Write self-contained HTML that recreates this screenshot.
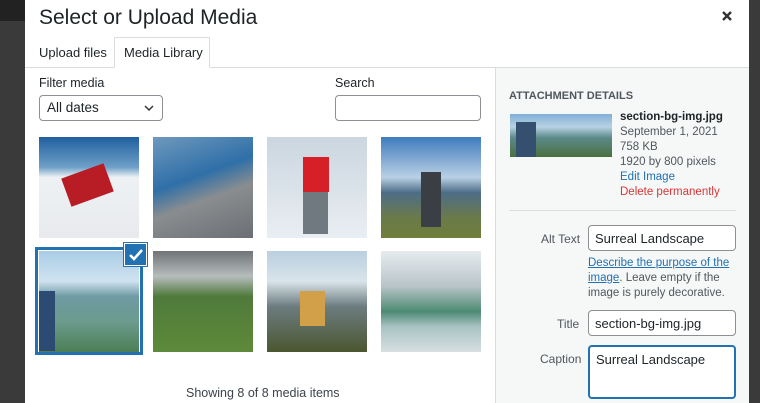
<!DOCTYPE html>
<html><head><style>
*{box-sizing:border-box;margin:0;padding:0}
body{width:760px;height:403px;overflow:hidden;background:#3a3a3a;font-family:"Liberation Sans",sans-serif;color:#1d2327;position:relative}
.abs{position:absolute}
.modal{left:25px;top:0;width:724px;height:403px;background:#fff}
h1{position:absolute;left:14px;top:6px;font-size:21px;font-weight:normal;color:#1d2327}
.x{position:absolute;left:696px;top:10px}
.tabs{position:absolute;left:0;top:67px;width:724px;border-top:1px solid #dcdcde}
.tab{position:absolute;font-size:13px;top:45px}
.side{position:absolute;left:470px;top:67px;width:254px;height:336px;background:#f6f7f7;border-left:1px solid #dcdcde;border-top:1px solid #dcdcde}
.lbl{font-size:12.5px;color:#1d2327}
.sel{position:absolute;left:14px;top:95px;width:124px;height:26px;border:1px solid #8c8f94;border-radius:4px;font-size:13.5px;padding:4px 7px}
.inp{position:absolute;border:1px solid #8c8f94;border-radius:4px;background:#fff;font-size:13px;padding:5px 6px}
.th{position:absolute;width:100px;height:101px}
.s{font-size:11.5px;color:#50575e;line-height:15px}
</style></head><body>
<div class="abs" style="left:0;top:0;width:25px;height:21px;background:#222"></div>
<div class="abs modal">
<h1>Select or Upload Media</h1>
<svg class="x" width="12" height="12"><path d="M2 2l8 8M10 2l-8 8" stroke="#333" stroke-width="2.4"/></svg>
<div class="abs" style="left:89px;top:37px;width:96px;height:31px;border:1px solid #dcdcde;border-bottom:1px solid #fff;background:#fff;z-index:2"></div>
<div class="tabs"></div>
<div class="tab" style="left:14px;z-index:3">Upload files</div>
<div class="tab" style="left:99px;z-index:3">Media Library</div>
<div class="abs lbl" style="left:14px;top:76px">Filter media</div>
<div class="sel">All dates<svg class="abs" style="left:104px;top:9px" width="10" height="7"><path d="M1 1l4 4 4-4" stroke="#333" stroke-width="1.5" fill="none"/></svg></div>
<div class="abs lbl" style="left:310px;top:76px">Search</div>
<div class="inp" style="left:310px;top:95px;width:146px;height:26px"></div>

<div class="th" style="left:14px;top:137px;background:linear-gradient(#1f5f9e 0,#6fa0c8 30%,#eef1f4 40%,#e8eaee 100%)"><div class="abs" style="left:26px;top:33px;width:45px;height:30px;background:#b81c24;transform:rotate(-20deg)"></div></div>
<div class="th" style="left:128px;top:137px;background:linear-gradient(160deg,#6f99bd 0,#2f6fa8 40%,#8a8d90 60%,#6b6e72 100%)"></div>
<div class="th" style="left:242px;top:137px;background:linear-gradient(#cbd6e0,#e9eef2)"><div class="abs" style="left:36px;top:20px;width:26px;height:35px;background:#d61f26"></div><div class="abs" style="left:36px;top:55px;width:25px;height:42px;background:#707880"></div></div>
<div class="th" style="left:356px;top:137px;background:linear-gradient(#3f7bbd 0,#b9d0e5 40%,#4d6d87 55%,#6a7a4a 80%,#6f7f3a 100%)"><div class="abs" style="left:40px;top:35px;width:20px;height:55px;background:#3a3f46"></div></div>

<div class="abs" style="left:10px;top:247px;width:108px;height:108px;border:3px solid #2271b1;box-shadow:inset 0 0 0 1px #fff"></div>
<div class="th" style="left:14px;top:251px;background:linear-gradient(#a9cde6 0,#cfe2ef 30%,#6e9aa3 45%,#6c9b8e 70%,#4c7f55 100%)"><div class="abs" style="left:0;top:40px;width:16px;height:60px;background:#2d4b72"></div></div>
<div class="abs" style="left:99px;top:243px;width:23px;height:23px;background:#2271b1;border:1px solid #fff;box-shadow:0 0 0 1px #2271b1"><svg width="21" height="21"><path d="M5 11l4 4 8-9" stroke="#fff" stroke-width="2.6" fill="none"/></svg></div>
<div class="th" style="left:128px;top:251px;background:linear-gradient(#6e7477 0,#b7bcbd 25%,#4f7a3b 45%,#5d8a3a 100%)"></div>
<div class="th" style="left:242px;top:251px;background:linear-gradient(#b9cfe0 0,#d9e4ea 30%,#6c7c80 55%,#4a5730 100%)"><div class="abs" style="left:33px;top:40px;width:25px;height:35px;background:#d2a048"></div></div>
<div class="th" style="left:356px;top:251px;background:linear-gradient(#e6ecef 0,#b8c4c8 35%,#4c8a72 60%,#a9c3c4 75%,#d8dfe0 100%)"></div>

<div class="abs" style="left:161px;top:386px;font-size:12.5px;color:#3c434a">Showing 8 of 8 media items</div>

<div class="side">
<div class="abs" style="left:13px;top:22px;font-size:11px;font-weight:bold;color:#50575e">ATTACHMENT DETAILS</div>
<div class="abs" style="left:14px;top:46px;width:102px;height:43px;background:linear-gradient(#7fb0d6 0,#b8d2e4 30%,#5c8a8a 55%,#4a7040 100%)"><div class="abs" style="left:6px;top:8px;width:20px;height:35px;background:#34506e"></div></div>
<div class="abs s" style="left:124px;top:42px;font-weight:bold;color:#1d2327">section-bg-img.jpg</div>
<div class="abs s" style="left:124px;top:57px">September 1, 2021<br>758 KB<br>1920 by 800 pixels<br><span style="color:#2271b1">Edit Image</span><br><span style="color:#d63638">Delete permanently</span></div>
<div class="abs" style="left:13px;top:142px;width:227px;border-top:1px solid #dcdcde"></div>
<div class="abs lbl" style="left:45px;top:164px;color:#50575e;font-size:12px">Alt Text</div>
<div class="inp" style="left:92px;top:157px;width:148px;height:26px;color:#1d2327">Surreal Landscape</div>
<div class="abs s" style="left:92px;top:188px"><span style="color:#2271b1;text-decoration:underline">Describe the purpose of the<br>image</span>. Leave empty if the<br>image is purely decorative.</div>
<div class="abs lbl" style="left:61px;top:249px;color:#50575e;font-size:12px">Title</div>
<div class="inp" style="left:92px;top:242px;width:148px;height:26px">section-bg-img.jpg</div>
<div class="abs lbl" style="left:44px;top:284px;color:#50575e;font-size:12px">Caption</div>
<div class="inp" style="left:92px;top:277px;width:148px;height:54px;border:2px solid #2271b1">Surreal Landscape</div>
</div>
</div>
</body></html>
